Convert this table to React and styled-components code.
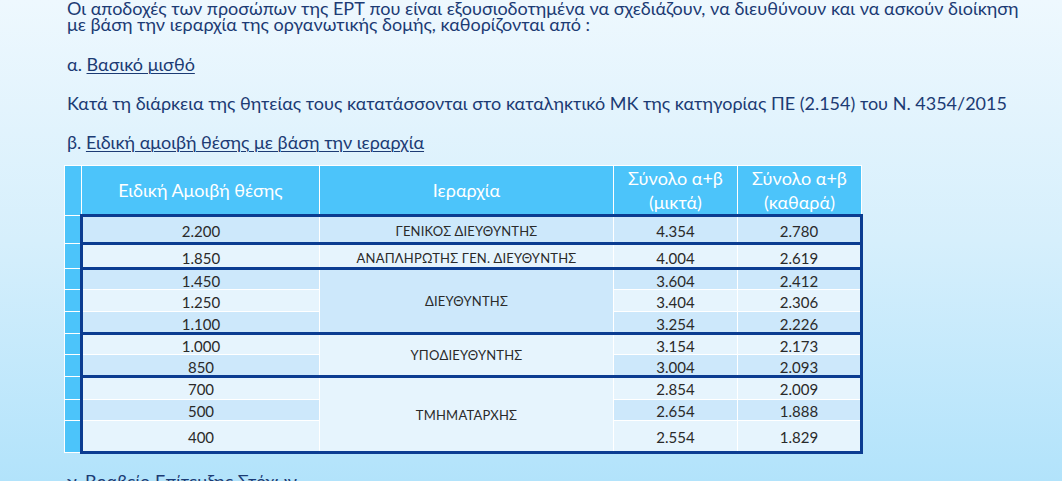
import React from "react";
import styled, { createGlobalStyle } from "styled-components";

const navy = "#1c3b74";
const boxLine = "#0b3c91";
const cyan = "#4cc4fa";
const rowDark = "#cde8fb";
const rowLight = "#e6f4fd";

const GlobalStyle = createGlobalStyle`
  html, body {
    margin: 0;
    padding: 0;
    height: 481px;
    overflow: hidden;
  }
  body {
    background: linear-gradient(180deg, #eef8fe 0%, #d6effc 50%, #b2e3fb 100%);
    font-family: Lato, "Open Sans", "Noto Sans", sans-serif;
    color: ${navy};
  }
`;

const Slide = styled.div({
  width: "1062px",
  height: "481px",
  boxSizing: "border-box",
  padding: "0 0 0 67px",
  display: "flex",
  flexDirection: "column",
});

const Para = styled.p`
  margin: ${(p) => p.$top || 0}px 0 0 0;
  font-size: 18px;
  line-height: ${(p) => p.$lh || 22}px;
  white-space: pre-line;
`;

const Link = styled.span({
  textDecoration: "underline",
  textUnderlineOffset: "2px",
  textDecorationThickness: "1px",
});

const Table = styled.table({
  marginTop: "12px",
  marginLeft: "-3px",
  borderCollapse: "collapse",
  tableLayout: "fixed",
  width: "797px",
  color: "#2a2a2a",
});

const Th = styled.th`
  background: ${cyan};
  color: #fff;
  font-weight: 400;
  font-size: 18px;
  line-height: 24px;
  height: 48px;
  border: 1px solid #fff;
  padding: 0;
  vertical-align: middle;
`;

const Strip = styled.td({
  background: cyan,
  border: "1px solid #fff",
  padding: 0,
});

const Td = styled.td`
  background: ${(p) => (p.$dark ? rowDark : rowLight)};
  border: 1px solid #fff;
  border-top: ${(p) => (p.$top ? `3px solid ${boxLine}` : "1px solid #fff")};
  border-bottom: ${(p) => (p.$bottom ? `3px solid ${boxLine}` : "1px solid #fff")};
  border-left: ${(p) => (p.$left ? `3px solid ${boxLine}` : "1px solid #fff")};
  border-right: ${(p) => (p.$right ? `3px solid ${boxLine}` : "1px solid #fff")};
  text-align: center;
  vertical-align: ${(p) => (p.$mid ? "middle" : "top")};
  padding: ${(p) => (p.$mid ? "0" : `${p.$pad}px 0 0 0`)};
  line-height: 16px;
  height: ${(p) => p.$h}px;
  font-size: ${(p) => (p.$caps ? "13px" : "15px")};
  letter-spacing: ${(p) => (p.$caps ? "0.2px" : "0")};
  white-space: nowrap;
`;

const groups = [
  { title: "ΓΕΝΙΚΟΣ ΔΙΕΥΘΥΝΤΗΣ", rows: [["2.200", "4.354", "2.780"]] },
  { title: "ΑΝΑΠΛΗΡΩΤΗΣ ΓΕΝ. ΔΙΕΥΘΥΝΤΗΣ", rows: [["1.850", "4.004", "2.619"]] },
  {
    title: "ΔΙΕΥΘΥΝΤΗΣ",
    rows: [
      ["1.450", "3.604", "2.412"],
      ["1.250", "3.404", "2.306"],
      ["1.100", "3.254", "2.226"],
    ],
  },
  {
    title: "ΥΠΟΔΙΕΥΘΥΝΤΗΣ",
    rows: [
      ["1.000", "3.154", "2.173"],
      ["850", "3.004", "2.093"],
    ],
  },
  {
    title: "ΤΜΗΜΑΤΑΡΧΗΣ",
    rows: [
      ["700", "2.854", "2.009"],
      ["500", "2.654", "1.888"],
      ["400", "2.554", "1.829"],
    ],
  },
];

// row heights and top padding, in order of the rows
const heights = [19, 17, 16, 17, 16, 16, 16, 18, 17, 22];
const pads = [6, 5, 3, 4, 4, 3, 4, 3, 3, 8];

const PayTable = () => {
  let idx = -1;
  return (
    <Table>
      <colgroup>
        <col style={{ width: "17px" }} />
        <col style={{ width: "238px" }} />
        <col style={{ width: "294px" }} />
        <col style={{ width: "124px" }} />
        <col style={{ width: "124px" }} />
      </colgroup>
      <thead>
        <tr>
          <Th />
          <Th>Ειδική Αμοιβή θέσης</Th>
          <Th>Ιεραρχία</Th>
          <Th>
            Σύνολο α+β
            <br />
            (μικτά)
          </Th>
          <Th>
            Σύνολο α+β
            <br />
            (καθαρά)
          </Th>
        </tr>
      </thead>
      <tbody>
        {groups.map((g) =>
          g.rows.map((r, i) => {
            idx += 1;
            const dark = idx % 2 === 0;
            const top = i === 0;
            const bottom = i === g.rows.length - 1;
            const common = { $dark: dark, $top: top, $bottom: bottom, $h: heights[idx], $pad: pads[idx] };
            return (
              <tr key={r[0]}>
                <Strip />
                <Td {...common} $left>
                  {r[0]}
                </Td>
                {top && (
                  <Td
                    $dark={dark}
                    $top
                    $bottom
                    $mid={g.rows.length > 1}
                    $pad={pads[idx]}
                    $caps
                    rowSpan={g.rows.length}
                  >
                    {g.title}
                  </Td>
                )}
                <Td {...common}>{r[1]}</Td>
                <Td {...common} $right>
                  {r[2]}
                </Td>
              </tr>
            );
          })
        )}
      </tbody>
    </Table>
  );
};

export default function App() {
  return (
    <>
      <GlobalStyle />
      <Slide>
        <Para $lh={16}>
          {"Οι αποδοχές των προσώπων της ΕΡΤ που είναι εξουσιοδοτημένα να σχεδιάζουν, να διευθύνουν και να ασκούν διοίκηση\nμε βάση την ιεραρχία της οργανωτικής δομής, καθορίζονται από :"}
        </Para>
        <Para $top={21}>
          α. <Link>Βασικό μισθό</Link>
        </Para>
        <Para $top={17}>
          Κατά τη διάρκεια της θητείας τους κατατάσσονται στο καταληκτικό ΜΚ της κατηγορίας ΠΕ (2.154) του Ν. 4354/2015
        </Para>
        <Para $top={17}>
          β. <Link>Ειδική αμοιβή θέσης με βάση την ιεραρχία</Link>
        </Para>
        <PayTable />
        <Para $top={16}>
          γ. <Link>Βραβείο Επίτευξης Στόχων</Link>
        </Para>
      </Slide>
    </>
  );
}
